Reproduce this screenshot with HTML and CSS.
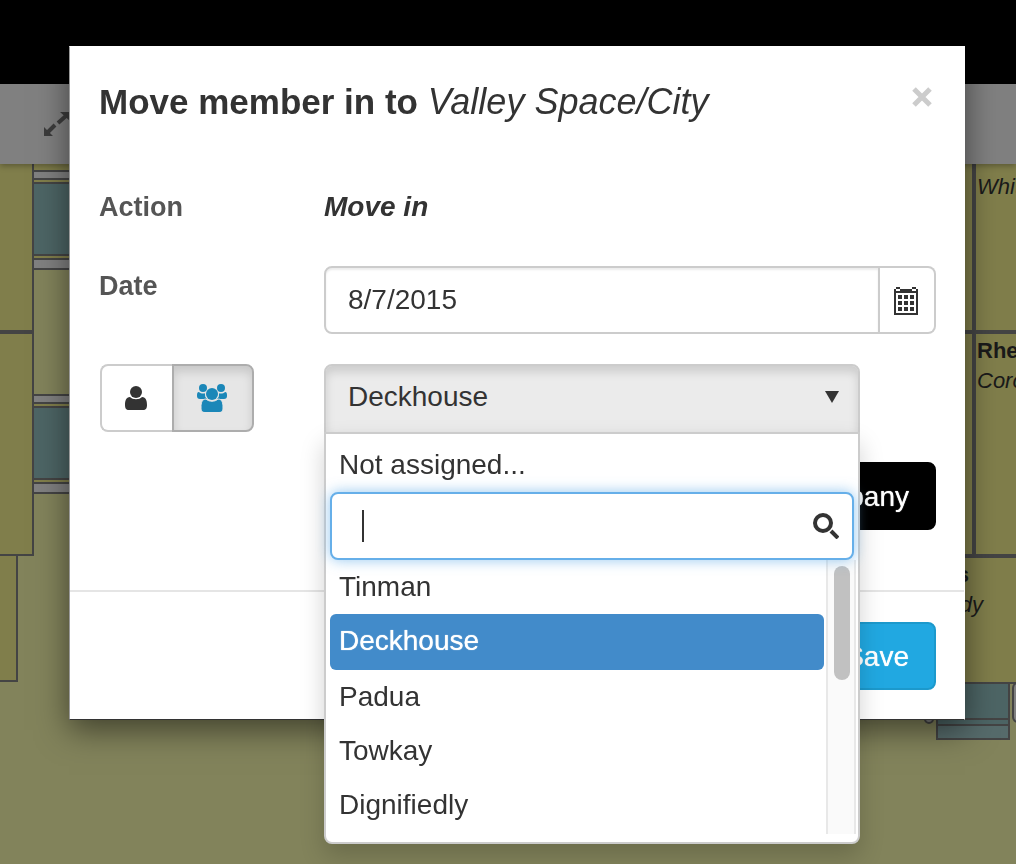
FILE: index.html
```html
<!DOCTYPE html>
<html lang="en">
<head>
<meta charset="utf-8">
<meta name="viewport" content="width=device-width, initial-scale=1">
<title>Move member in</title>
<link rel="stylesheet" href="styles.css">
</head>
<body>
<div class="page">
  <div class="navbar"></div>
  <div class="toolbar">
    <svg width="26" height="24" viewBox="0 0 26 24" aria-hidden="true">
      <path fill="#3c3c3c" d="M16 0h10v9zM0 24v-9l9 9z"/>
      <path stroke="#3c3c3c" stroke-width="4" d="M3 21l8-8M14 11l9-8"/>
    </svg>
  </div>
  <div class="floor-plan">
    <svg class="plan-left" width="80" height="700" viewBox="0 0 80 700" aria-hidden="true">
      <g fill="#807e4b" stroke="#444" stroke-width="2">
        <rect x="-5" y="-5" width="38" height="172"/>
        <rect x="-5" y="169" width="38" height="222"/>
        <rect x="-5" y="391" width="22" height="126"/>
      </g>
      <path fill="#807e4b" d="M34 0h46v16H34z"/>
      <g id="desks">
        <path fill="#807e4b" d="M34 6h46v100H34z"/>
        <path fill="#808080" d="M34 7h46v8H34zM34 95h46v10H34z"/>
        <path fill="#4d6565" d="M34 19h46v72H34z"/>
        <path stroke="#444" stroke-width="2" d="M34 7h46M34 15h46M34 19h46M34 91h46M34 95h46M34 105h46"/>
      </g>
      <use href="#desks" y="224"/>
    </svg>
    <svg class="plan-right" width="100" height="700" viewBox="0 0 100 700">
      <path fill="#807e4b" d="M0 0h100v519H0z"/>
      <path fill="none" stroke="#444" stroke-width="4" d="M58 0v390M0 168h100M0 392h100"/>
      <g stroke="#444" stroke-width="2">
        <rect x="21" y="519" width="72" height="36" fill="#4d6565"/>
        <path fill="#566b6b" d="M21 561h72v14H21z"/>
        <path fill="#4d6565" d="M21 555h72v6H21z"/>
        <path d="M0 519h100"/>
        <rect x="97" y="519" width="20" height="39" rx="5" fill="#808080"/>
        <rect x="9" y="540" width="8" height="19" rx="4" fill="#808080"/>
      </g>
      <g class="plan-text">
        <text x="61" y="30" class="person">Whit</text>
        <text x="61" y="194" class="company">Rhe</text>
        <text x="61" y="224" class="person">Coro</text>
        <text x="53" y="418" class="company" text-anchor="end">s</text>
        <text x="67" y="448" class="person" text-anchor="end">dy</text>
      </g>
    </svg>
  </div>
</div>

<div class="overlay">
  <form class="modal" role="dialog" aria-labelledby="dialog-title">
    <header class="modal-header">
      <h1 class="modal-title" id="dialog-title">Move member in to <em>Valley Space/City</em></h1>
      <button class="close" type="button" aria-label="Close">
        <svg width="22" height="22" viewBox="0 0 22 22" aria-hidden="true"><path d="M3 3l16 16M19 3L3 19" stroke="#ccc" stroke-width="5"/></svg>
      </button>
    </header>
    <div class="modal-body">
      <div class="row row-action">
        <span class="label">Action</span>
        <strong class="action">Move in</strong>
      </div>
      <div class="row">
        <label class="label" for="date">Date</label>
        <div class="date-group">
          <input class="date-input" id="date" type="text" value="8/7/2015">
          <button class="date-button" type="button" aria-label="Open calendar">
            <svg width="24" height="28" viewBox="0 0 24 28" shape-rendering="crispEdges" aria-hidden="true">
              <path fill="#333" d="M0 2h24v26H0z"/>
              <path fill="#fff" d="M2 6h20v20H2zM2 2h4v2H2zM18 2h4v2h-4z"/>
              <path fill="#333" d="M2 0h4v2H2zM18 0h4v2h-4zM4 8h4v4H4zM10 8h4v4h-4zM16 8h4v4h-4zM4 14h4v4H4zM10 14h4v4h-4zM16 14h4v4h-4zM4 20h4v4H4zM10 20h4v4h-4zM16 20h4v4h-4z"/>
            </svg>
          </button>
        </div>
      </div>
      <div class="row">
        <div class="toggle">
          <button class="toggle-button" type="button" aria-label="Member">
            <svg width="22" height="24" viewBox="0 0 22 24" aria-hidden="true">
              <path fill="#333" d="M5 11c3 3 9 3 12 0 4 0 5 4 5 8 0 3-1 5-4 5H4c-3 0-4-2-4-5 0-4 1-8 5-8z"/>
              <circle cx="11" cy="6" r="7" fill="#fff"/><circle cx="11" cy="6" r="6" fill="#333"/>
            </svg>
          </button>
          <button class="toggle-button active" type="button" aria-label="Company" aria-pressed="true">
            <svg width="30" height="28" viewBox="0 0 30 28" aria-hidden="true">
              <path fill="#1b87b8" d="M2 8c2 2 6 2 8 0v7H3c-2 0-3-1-3-3 0-2 0-4 2-4zM28 8c-2 2-6 2-8 0v7h7c2 0 3-1 3-3 0-2 0-4-2-4z"/>
              <circle cx="15" cy="10" r="7" fill="#e6e6e6"/>
              <path fill="#1b87b8" stroke="#e6e6e6" d="M9 15c3 3 9 3 12 0 4 0 5 4 5 8 0 4-1 5.500-4 5.500H8c-3 0-4-1.500-4-5.500 0-4 1-8 5-8z"/>
              <circle cx="15" cy="10" r="7" fill="#e6e6e6"/>
              <g fill="#1b87b8"><circle cx="6" cy="4" r="4"/><circle cx="24" cy="4" r="4"/><circle cx="15" cy="10" r="6"/></g>
            </svg>
          </button>
        </div>
        <div class="picker">
          <button class="picker-button" type="button" aria-expanded="true">
            <span>Deckhouse</span>
            <svg width="14" height="12" viewBox="0 0 14 12" aria-hidden="true"><path fill="#333" d="M0 0h14L7 12z"/></svg>
          </button>
          <div class="menu">
            <div class="option option-none">Not assigned...</div>
            <div class="search">
              <input class="search-input" type="text" aria-label="Search">
              <span class="caret"></span>
              <svg class="search-icon" width="26" height="26" viewBox="0 0 26 26" aria-hidden="true"><g fill="none" stroke="#333" stroke-width="4"><circle cx="10" cy="10" r="8"/><path d="M18 18l7 7"/></g></svg>
            </div>
            <div class="results">
              <ul class="list">
                <li class="option">Tinman</li>
                <li class="option selected">Deckhouse</li>
                <li class="option">Padua</li>
                <li class="option">Towkay</li>
                <li class="option">Dignifiedly</li>
              </ul>
              <div class="track"><div class="thumb"></div></div>
            </div>
          </div>
        </div>
      </div>
      <div class="row row-end">
        <button class="button button-dark" type="button">Company</button>
      </div>
    </div>
    <footer class="modal-footer">
      <button class="button button-primary" type="submit">Save</button>
    </footer>
  </form>
</div>
</body>
</html>
```
FILE: styles.css
```css
* { box-sizing: border-box; }

body {
  margin: 0;
  overflow: hidden;
  font-family: "Liberation Sans", Arial, sans-serif;
  font-size: 28px;
  line-height: 40px;
  color: #333;
}

button, input {
  margin: 0;
  font: inherit;
  color: inherit;
}

button { cursor: pointer; }

svg { display: block; }

/* Floor plan behind the dialog */
.page {
  display: flex;
  flex-direction: column;
  height: 100vh;
  background: #82835b;
  isolation: isolate;
}

.navbar { flex: none; height: 84px; background: #000; }

.toolbar {
  flex: none;
  display: flex;
  align-items: center;
  height: 80px;
  padding-left: 44px;
  background: #808080;
  box-shadow: 0 2px 6px rgba(0, 0, 0, .3);
  z-index: 1;
}

.floor-plan {
  flex: 1;
  display: flex;
  justify-content: space-between;
  min-height: 0;
  overflow: hidden;
}

.plan-text { fill: #1a1a1a; font-size: 22px; }
.company { font-weight: bold; }
.person { font-style: italic; }

/* Dialog */
.overlay {
  position: fixed;
  inset: 0;
  z-index: 10;
  padding: 46px 51px 0 69px;
}

.modal {
  background: #fff;
  border: 1px solid #999;
  border-color: #fff #fff #333 #999;
  box-shadow: 0 10px 30px rgba(0, 0, 0, .5);
}

.modal-header {
  display: flex;
  justify-content: space-between;
  align-items: flex-start;
  padding: 35px 30px 65px 29px;
}

.modal-title {
  margin: 0;
  font-size: 35px;
  line-height: 40px;
}

.modal-title em { font-size: 36px; font-weight: normal; }

.close {
  padding: 4px 1px;
  border: 0;
  background: none;
}

.modal-body { padding: 0 28px 60px 29px; }

.row {
  display: grid;
  grid-template-columns: 225px 1fr;
  align-items: start;
  margin-bottom: 30px;
}

.row-action { margin-bottom: 39px; }
.row-end { display: flex; justify-content: flex-end; margin-bottom: 0; }

.label { font-size: 27px; font-weight: bold; color: #555; }
.action { font-style: italic; }

.date-group { display: flex; }

.date-input {
  flex: 1;
  min-width: 0;
  height: 68px;
  padding: 0 22px;
  border: 2px solid #ccc;
  border-radius: 8px 0 0 8px;
  box-shadow: inset 0 2px 2px rgba(0, 0, 0, .08);
  background: #fff;
}

.date-button {
  display: flex;
  align-items: center;
  padding: 2px 16px 0 14px;
  border: 2px solid #ccc;
  border-left: 0;
  border-radius: 0 8px 8px 0;
  background: #fff;
}

.toggle {
  display: flex;
  margin-left: 1px;
}

.toggle-button {
  display: flex;
  align-items: center;
  height: 68px;
  padding: 0 25px 0 23px;
  border: 2px solid #ccc;
  border-right: 0;
  border-radius: 8px 0 0 8px;
  background: #fff;
}

.toggle-button.active {
  border: 2px solid #adadad;
  border-radius: 0 8px 8px 0;
  background: #e6e6e6;
  box-shadow: inset 0 6px 10px rgba(0, 0, 0, .13);
}

/* Company picker */
.picker {
  position: relative;
  margin-right: 76px;
}

.picker-button {
  display: flex;
  justify-content: space-between;
  align-items: center;
  width: 100%;
  height: 70px;
  margin-bottom: -2px;
  padding: 0 19px 4px 22px;
  border: 2px solid #ccc;
  border-radius: 8px 8px 0 0;
  background: #ebebeb;
  box-shadow: inset 0 6px 10px rgba(0, 0, 0, .13);
}

.menu {
  position: absolute;
  z-index: 2;
  top: 68px;
  left: 0;
  right: 0;
  padding: 4px 2px 8px 4px;
  border: 2px solid #ccc;
  border-radius: 0 0 8px 8px;
  background: #fff;
  box-shadow: 0 12px 24px rgba(0, 0, 0, .18);
}

.option {
  padding: 7px 9px;
  border-radius: 6px;
}

.search {
  position: relative;
  margin-right: 2px;
}

.search-input {
  display: block;
  width: 100%;
  height: 68px;
  padding: 0 54px 0 30px;
  border: 2px solid #66afe9;
  border-radius: 8px;
  outline: 0;
  background: #fff;
  box-shadow: 0 0 14px rgba(102, 175, 233, .7);
}

.caret {
  position: absolute;
  top: 18px;
  left: 32px;
  width: 2px;
  height: 32px;
  background: #333;
}

.search-icon {
  position: absolute;
  top: 21px;
  right: 15px;
}

.results { display: flex; gap: 2px; }

.list {
  flex: 1;
  margin: 0;
  padding: 0;
  list-style: none;
}

.selected {
  padding-bottom: 9px;
  background: #428bca;
  color: #fff;
  text-shadow: 0 0 1px #fff;
}

.track {
  width: 30px;
  height: 274px;
  padding: 6px;
  border: solid #e8e8e8;
  border-width: 0 2px;
  background: #fafafa;
}

.thumb {
  width: 16px;
  height: 114px;
  border-radius: 8px;
  background: #c1c1c1;
}

/* Buttons */
.button {
  height: 68px;
  padding: 2px 25px 0;
  border: 2px solid #000;
  border-radius: 8px;
  color: #fff;
  text-shadow: 0 0 1px #fff;
}

.button-dark { background: #000; }
.button-primary { border-color: #1c99cc; background: #21a8e1; }

.modal-footer {
  display: flex;
  justify-content: flex-end;
  padding: 30px 28px 29px;
  border-top: 2px solid #e5e5e5;
}
```
